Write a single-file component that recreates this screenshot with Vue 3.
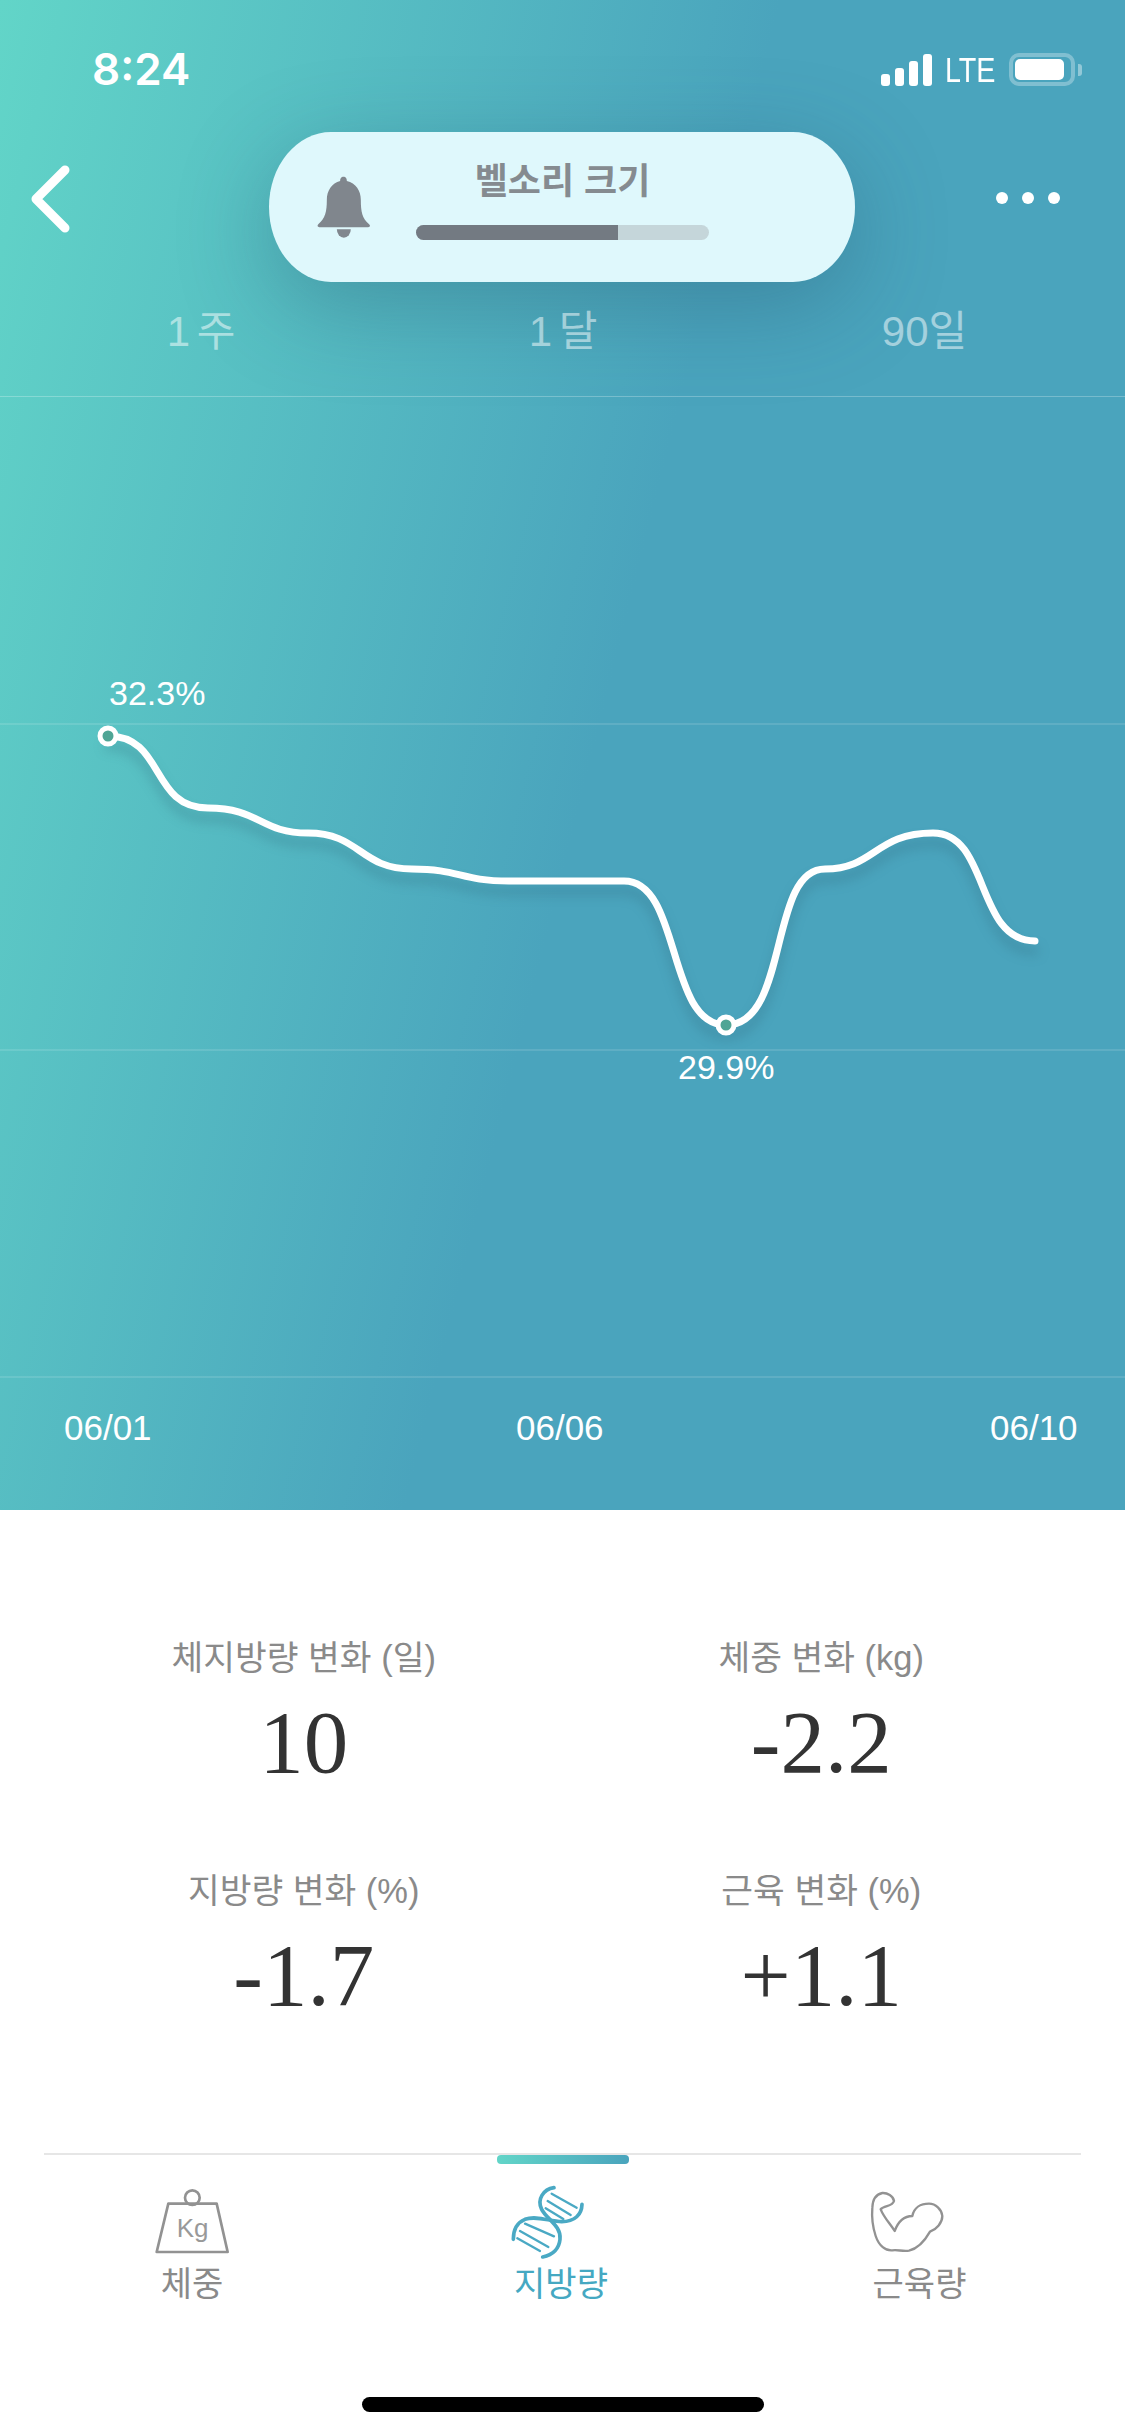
<script setup>
const periods = ['1 주', '1 달', '90일']
const dates = ['06/01', '06/06', '06/10']
const stats = [
  { label: '체지방량 변화 (일)', value: '10' },
  { label: '체중 변화 (kg)', value: '-2.2' },
  { label: '지방량 변화 (%)', value: '-1.7' },
  { label: '근육 변화 (%)', value: '+1.1' },
]
const signalBars = [12, 18, 25, 32]
const curve =
  'M108 736 C165 736 150 808 208 808 C260 808 260 833 308 833 C360 833 360 869 412 869 C460 869 460 881 509 881 L624 881 C682 881 666 1025 726 1025 C790 1025 768 869 825 869 C875 869 875 833 933 833 C990 833 975 941 1035 941'
</script>

<template>
  <div class="page">
    <section class="hero">
      <div class="status">
        <span class="time">8:24</span>
        <div class="status-right">
          <div class="signal">
            <i v-for="h in signalBars" :key="h" :style="{ height: h + 'px' }"></i>
          </div>
          <span class="lte">LTE</span>
          <div class="battery"><b></b></div>
          <div class="nub"></div>
        </div>
      </div>

      <div class="nav">
        <svg class="back" viewBox="0 0 45 70">
          <path d="M37 6 L8 35 L37 64" />
        </svg>
        <div class="pill">
          <svg class="bell" viewBox="75 75 170 195">
            <path d="M160 80 C152 80 150 87 150 93 C125 99 110 122 110 150 C110 185 105 205 85 222 C79 228 84 232 90 232 L232 232 C238 232 243 228 236 222 C216 205 212 185 212 150 C212 122 197 99 170 93 C170 87 168 80 160 80 Z" />
            <path d="M140 238 L182 238 A21 25 0 0 1 140 238 Z" />
          </svg>
          <div class="volume">
            <div class="volume-title">벨소리 크기</div>
            <div class="volume-bar"><span></span></div>
          </div>
        </div>
        <div class="dots"><i></i><i></i><i></i></div>
      </div>

      <div class="periods">
        <span v-for="p in periods" :key="p">{{ p }}</span>
      </div>

      <svg class="chart" viewBox="0 397 1125 981">
        <line x1="0" x2="1125" y1="724" y2="724" class="grid" />
        <line x1="0" x2="1125" y1="1050" y2="1050" class="grid" />
        <line x1="0" x2="1125" y1="1377" y2="1377" class="grid" />
        <path :d="curve" class="curve" />
        <circle cx="108" cy="736" r="8" class="dot" />
        <circle cx="726" cy="1025" r="8" class="dot" />
        <text x="109" y="705" class="chart-label">32.3%</text>
        <text x="678" y="1079" class="chart-label">29.9%</text>
      </svg>

      <div class="dates">
        <span v-for="d in dates" :key="d">{{ d }}</span>
      </div>
    </section>

    <section class="stats">
      <div v-for="s in stats" :key="s.label" class="stat">
        <div class="stat-label">{{ s.label }}</div>
        <div class="stat-value">{{ s.value }}</div>
      </div>
    </section>

    <nav class="tabs">
      <span class="indicator"></span>
      <div class="tab">
        <svg class="tab-icon" viewBox="-9 15 300 240">
          <circle cx="142" cy="50" r="22" class="line" />
          <path d="M70 68 L215 68 L248 213 L35 213 Z" class="line" />
          <text x="143" y="167" class="kg">Kg</text>
        </svg>
        <span>체중</span>
      </div>
      <div class="tab active">
        <svg class="tab-icon" viewBox="93 105 300 240">
          <g class="dna">
            <path d="M222 110 C190 115 170 145 185 175 C200 205 245 225 240 265 C237 295 215 312 188 318" />
            <path d="M306 160 C305 190 285 212 245 212 C210 212 170 192 135 205 C110 215 100 240 100 265" />
            <path d="M215 128 L290 170 M203 150 L272 192 M197 172 L250 204 M135 218 L222 256 M120 240 L205 288 M112 262 L180 300" class="rung" />
          </g>
        </svg>
        <span>지방량</span>
      </div>
      <div class="tab">
        <svg class="tab-icon" viewBox="28 15 300 240">
          <path d="M102 150 C90 130 70 110 60 85 C70 72 95 78 100 60 C98 45 80 35 65 36 C45 40 36 55 35 80 C33 105 35 135 45 165 C55 195 75 210 95 208 C110 205 125 212 145 209 C175 202 195 175 208 152 C228 145 245 125 245 105 C243 85 225 68 205 68 C180 68 160 80 155 105 C135 105 115 115 102 150 Z" class="line thin" />
        </svg>
        <span>근육량</span>
      </div>
    </nav>

    <div class="home"></div>
  </div>
</template>

<style>
html,
body {
  margin: 0;
  background: #fff;
}
</style>

<style scoped>
.page {
  position: relative;
  width: 1125px;
  height: 2436px;
  overflow: hidden;
  background: #fff;
  font-family: "Liberation Sans", "Noto Sans CJK KR", sans-serif;
  display: flex;
  flex-direction: column;
}

.hero {
  height: 1510px;
  display: flex;
  flex-direction: column;
  background: linear-gradient(104deg, #62d5c8 0%, #4aa4bd 52%);
  color: #fff;
}

.status {
  height: 132px;
  box-sizing: border-box;
  padding: 43px 43px 0 92px;
  display: flex;
  justify-content: space-between;
  align-items: flex-start;
}

.time {
  font-family: Inter, sans-serif;
  font-weight: 600;
  font-size: 44px;
  line-height: 53px;
}

.status-right {
  display: flex;
  align-items: center;
  height: 33px;
  margin-top: 10px;
}

.signal {
  display: flex;
  align-items: flex-end;
  gap: 5px;
  height: 32px;
  margin-right: 13px;
}

.signal i {
  width: 9px;
  background: #fff;
  border-radius: 3px;
}

.lte {
  width: 51px;
  margin-right: 13px;
  font-size: 35px;
  line-height: 33px;
  transform: scaleX(0.82);
  transform-origin: left center;
  white-space: nowrap;
}

.battery {
  width: 66px;
  height: 33px;
  box-sizing: border-box;
  border: 4px solid rgba(255, 255, 255, 0.3);
  border-radius: 10px;
  padding: 2px;
  display: flex;
}

.battery b {
  width: 49px;
  background: #fff;
  border-radius: 5px;
}

.nub {
  width: 4px;
  height: 12px;
  margin-left: 3px;
  background: rgba(255, 255, 255, 0.4);
  border-radius: 0 3px 3px 0;
}

.nav {
  height: 150px;
  display: flex;
  align-items: center;
  padding-left: 28px;
}

.back {
  width: 45px;
  height: 70px;
  margin-top: -17px;
  fill: none;
  stroke: #fff;
  stroke-width: 9;
  stroke-linecap: round;
  stroke-linejoin: round;
}

.pill {
  width: 586px;
  height: 150px;
  margin-left: 196px;
  box-sizing: border-box;
  padding-left: 46px;
  display: flex;
  align-items: center;
  gap: 44px;
  background: #dff8fc;
  border-radius: 62px / 75px;
  box-shadow: 0 24px 90px rgba(40, 85, 110, 0.36);
}

.bell {
  width: 57px;
  height: 65px;
  fill: #80868d;
}

.volume {
  width: 293px;
  margin-bottom: 12px;
}

.volume-title {
  text-align: center;
  color: #858b90;
  font-size: 36px;
  font-weight: 700;
  line-height: 40px;
  margin-bottom: 23px;
}

.volume-bar {
  height: 15px;
  background: #c5d6da;
  border-radius: 8px;
  overflow: hidden;
}

.volume-bar span {
  display: block;
  width: 69%;
  height: 100%;
  background: #737a82;
}

.dots {
  display: flex;
  gap: 14px;
  margin-left: 141px;
  margin-top: -18px;
}

.dots i {
  width: 12px;
  height: 12px;
  border-radius: 50%;
  background: #fff;
}

.periods {
  height: 115px;
  box-sizing: border-box;
  padding-top: 25px;
  display: grid;
  grid-template-columns: 402px 322px 1fr;
  text-align: center;
  font-size: 42px;
  line-height: 50px;
  word-spacing: -5px;
  color: rgba(255, 255, 255, 0.5);
  border-bottom: 1px solid rgba(255, 255, 255, 0.25);
}

.chart {
  display: block;
  width: 1125px;
  height: 981px;
  overflow: visible;
}

.grid {
  stroke: rgba(255, 255, 255, 0.16);
  stroke-width: 1.5;
}

.curve {
  fill: none;
  stroke: #fff;
  stroke-width: 7;
  stroke-linecap: round;
  filter: drop-shadow(0 10px 6px rgba(40, 90, 110, 0.3));
}

.dot {
  fill: #4fa595;
  stroke: #fff;
  stroke-width: 5;
}

.chart-label {
  fill: #fff;
  font-size: 34px;
}

.dates {
  flex: 1;
  box-sizing: border-box;
  padding: 30px 0 0 64px;
  display: grid;
  grid-template-columns: 452px 474px auto;
  font-size: 35px;
  line-height: 40px;
}

.stats {
  height: 643px;
  box-sizing: border-box;
  padding: 126px 45px 0;
  display: grid;
  grid-template-columns: 1fr 1fr;
  grid-auto-rows: 233px;
  text-align: center;
}

.stat-label {
  color: #8a8a8a;
  font-size: 34.5px;
  line-height: 44px;
}

.stat-value {
  margin-top: 12px;
  color: #333;
  font-family: "Liberation Serif", serif;
  font-size: 89px;
  line-height: 100px;
}

.tabs {
  position: relative;
  margin: 0 44px;
  padding-top: 31px;
  border-top: 2px solid #e6e6e6;
  display: grid;
  grid-template-columns: 296px 442px 275px;
  text-align: center;
  color: #8a8a8a;
  font-size: 34px;
  line-height: 40px;
}

.indicator {
  position: absolute;
  left: 453px;
  top: 0;
  width: 132px;
  height: 9px;
  border-radius: 4px;
  background: linear-gradient(90deg, #62d5c8, #4aa4bd);
}

.tab {
  display: flex;
  flex-direction: column;
  align-items: center;
}

.tab.active {
  color: #45a8c2;
}

.tab-icon {
  width: 100px;
  height: 80px;
  margin-bottom: -2px;
  overflow: visible;
}

.line {
  fill: none;
  stroke: #929292;
  stroke-width: 8;
  stroke-linejoin: round;
}

.line.thin {
  stroke-width: 7;
}

.kg {
  fill: #999;
  font-size: 78px;
  text-anchor: middle;
}

.dna {
  fill: none;
  stroke: #4aa9c4;
  stroke-width: 11;
  stroke-linecap: round;
}

.rung {
  stroke-width: 7;
}

.home {
  position: absolute;
  left: 362px;
  top: 2397px;
  width: 402px;
  height: 15px;
  border-radius: 8px;
  background: #000;
}
</style>
